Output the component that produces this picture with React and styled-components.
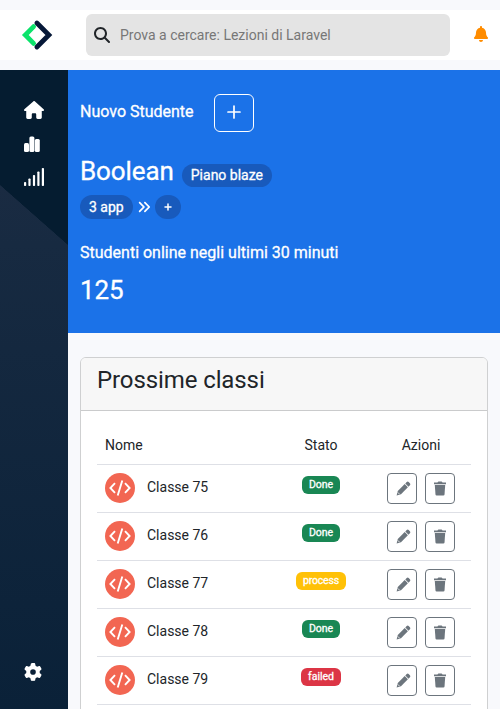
import React from "react";
import styled, { createGlobalStyle } from "styled-components";
import {
  FaMagnifyingGlass,
  FaHouse,
  FaGear,
  FaAnglesRight,
} from "react-icons/fa6";
import { FaBell } from "react-icons/fa";

const GlobalStyle = createGlobalStyle`
  * { box-sizing: border-box; }
  body {
    margin: 0;
    background: #f8f9fc;
    color: #212529;
    font-family: Roboto, "Liberation Sans", sans-serif;
    font-size: 14px;
    letter-spacing: 0;
    overflow: hidden;
  }
`;

const Page = styled.div`
  height: 709px;
  padding-top: 10px;
  display: flex;
  flex-direction: column;
  overflow: hidden;
`;

const TopBar = styled.header`
  flex: none;
  height: 50px;
  margin-bottom: 10px;
  background: #fff;
  display: flex;
  align-items: center;
  padding: 0 11px 0 21px;
`;

const Logo = styled.svg`
  display: block;
  width: 32px;
  height: 32px;
  margin-right: 33px;
`;

const SearchBox = styled.div`
  width: 364px;
  height: 42px;
  border-radius: 6px;
  background: #e4e4e4;
  display: flex;
  align-items: center;
  padding-left: 8px;
  gap: 10px;
  color: #777;
  svg { color: #212529; }
`;

const BellButton = styled.div`
  margin-left: auto;
  margin-bottom: 2px;
  display: flex;
  color: #ff8c00;
`;

const Body = styled.div`
  flex: 1;
  min-height: 0;
  display: flex;
`;

const Sidebar = styled.nav`
  flex: none;
  width: 68px;
  padding: 30px 0 28px 24px;
  display: flex;
  flex-direction: column;
  color: #fff;
  background:
    linear-gradient(to top right, transparent 49.7%, #051c30 50.3%) 0 115px / 68px 60px no-repeat,
    linear-gradient(#051c30, #051c30) 0 0 / 68px 115px no-repeat,
    linear-gradient(#1a2b42 115px, #172a41 175px, #0a2138 100%);
  svg { display: block; flex: none; }
`;

const Bars = styled.svg`
  width: 16px;
  height: 16px;
  margin-top: 16px;
`;

const Signal = styled.svg`
  width: 20px;
  height: 18px;
  margin-top: 16px;
`;

const SettingsLink = styled.div`
  margin-top: auto;
`;

const Main = styled.main`
  flex: 1;
  min-width: 0;
`;

const Hero = styled.section`
  height: 263px;
  padding: 24px 12px;
  background: #1b72e8;
  color: #fff;
  -webkit-text-stroke: 0.3px #fff;
`;

const NewStudent = styled.div`
  display: flex;
  align-items: flex-start;
  font-size: 16px;
  line-height: 35px;
`;

const NewStudentLabel = styled.span`
  width: 134px;
`;

const AddButton = styled.button`
  width: 40px;
  height: 38px;
  padding: 0 0 2px;
  border: 1px solid #fff;
  border-radius: 6px;
  background: transparent;
  color: #fff;
  display: flex;
  align-items: center;
  justify-content: center;
`;

const PlanRow = styled.div`
  display: flex;
  gap: 8px;
  margin-top: 23px;
  height: 34px;
`;

const BigText = styled.div`
  font-size: 26px;
  line-height: 32px;
  letter-spacing: -0.1px;
`;

const Pill = styled.span`
  height: ${(p) => p.$height || 24}px;
  padding: 0 9px;
  margin-top: ${(p) => p.$drop || 0}px;
  border-radius: 12px;
  background: #185abc;
  font-size: 14px;
  line-height: ${(p) => p.$height || 24}px;
  white-space: nowrap;
  display: flex;
  align-items: center;
`;

const AppRow = styled.div`
  display: flex;
  align-items: center;
  gap: 4px;
  margin-top: 6px;
`;

const OnlineLabel = styled.div`
  margin-top: 22px;
  font-size: 16px;
  line-height: 24px;
`;

const Count = styled(BigText)`
  margin-top: 9px;
`;

const Card = styled.section`
  margin: 24px 12px 0;
  height: 400px;
  border: 1px solid #cfd0d1;
  border-radius: 6px;
  background: #fff;
  overflow: hidden;
`;

const CardHeader = styled.h2`
  margin: 0;
  height: 53px;
  padding: 7px 16px 0;
  border-bottom: 1px solid #cacbcc;
  background: #f7f7f7;
  font-size: 24px;
  line-height: 30px;
  font-weight: 400;
  letter-spacing: -0.1px;
`;

const Table = styled.div`
  padding: 16px;
`;

const Row = styled.div`
  display: grid;
  grid-template-columns: 174px 100px 100px;
  height: ${(p) => (p.$head ? 38 : 48)}px;
  border-bottom: 1px solid #dee0e6;
  justify-items: center;
  align-items: start;
`;

const HeadCell = styled.div`
  line-height: 36px;
  justify-self: ${(p) => (p.$start ? "start" : "center")};
  padding: 0 ${(p) => (p.$start ? 8 : 0)}px;
`;

const NameCell = styled.div`
  justify-self: start;
  padding: 8px 8px 0;
  display: flex;
  gap: 12px;
  line-height: 29px;
`;

const CodeIcon = styled.svg`
  width: 30px;
  height: 30px;
`;

const statusColors = { Done: "#198754", process: "#ffc107", failed: "#dc3545" };

const Status = styled.span`
  margin-top: 11px;
  height: 18px;
  padding: 0 7px;
  border-radius: 6px;
  background: ${(p) => statusColors[p.$status]};
  color: #fff;
  font-size: 10.5px;
  letter-spacing: ${(p) => (p.$status === "process" ? -0.2 : 0)}px;
  line-height: 17px;
  -webkit-text-stroke: 0.3px #fff;
`;

const Actions = styled.div`
  display: flex;
  gap: 8px;
  padding-top: 8px;
`;

const ActionButton = styled.button`
  width: 30px;
  height: 31px;
  padding: 0 0 1px;
  border: 1px solid #6c757d;
  border-radius: 4px;
  background: #fff;
  color: #6c757d;
  display: flex;
  align-items: center;
  justify-content: center;
`;

const PencilIcon = styled.svg`
  display: block;
  width: 15px;
  height: 15px;
  margin-left: 2px;
`;

const TrashIcon = styled.svg`
  display: block;
  width: 12px;
  height: 15px;
`;

const classes = [
  ["Classe 75", "Done"],
  ["Classe 76", "Done"],
  ["Classe 77", "process"],
  ["Classe 78", "Done"],
  ["Classe 79", "failed"],
];

function Plus({ size, weight }) {
  return (
    <svg width={size} height={size} viewBox={`0 0 ${size} ${size}`} stroke="currentColor" strokeWidth={weight} strokeLinecap="round">
      <path d={`M${size / 2} 1V${size - 1}M1 ${size / 2}H${size - 1}`} />
    </svg>
  );
}

function Pencil() {
  return (
    <PencilIcon viewBox="0 0 15 15" fill="currentColor">
      <path d="M10.7 1.1q1-1 2 0l1.2 1.2q1 1 0 2l-1.4 1.4-3.2-3.2z" />
      <path d="M8.7 3.1l3.2 3.2-6.9 6.9-4.4 1.2L1.8 10z" />
      <path d="M1.8 11.4l1.8 1.8" stroke="#fff" strokeWidth="0.8" />
    </PencilIcon>
  );
}

function Trash() {
  return (
    <TrashIcon viewBox="0 0 12 15" fill="currentColor">
      <path d="M0 1.6h3.4L4.4.6h3.2l1 1H12v1.7H0z" />
      <path d="M.8 4.1h10.4l-.7 9.5q-.1 1-1.1 1H2.6q-1 0-1.1-1z" />
    </TrashIcon>
  );
}

export default function App() {
  return (
    <Page>
      <GlobalStyle />
      <TopBar>
        <Logo viewBox="0 0 32 32" fill="none" strokeLinecap="round">
          <path d="M12.6 7.6 L4.3 16 L12.6 24.4" stroke="#0be36b" strokeWidth="4.8" />
          <path d="M15.9 4 L27.9 16 L15.9 28" stroke="#061838" strokeWidth="4.8" />
        </Logo>
        <SearchBox>
          <FaMagnifyingGlass size={16} />
          Prova a cercare: Lezioni di Laravel
        </SearchBox>
        <BellButton><FaBell size={16} /></BellButton>
      </TopBar>
      <Body>
        <Sidebar>
          <FaHouse size={20} />
          <Bars viewBox="0 0 16 16" fill="currentColor">
            <rect x="0" y="7" width="5" height="9" rx="1.5" />
            <rect x="5.4" y="0.5" width="5" height="15.5" rx="1.5" />
            <rect x="10.8" y="3" width="5" height="13" rx="1.5" />
          </Bars>
          <Signal viewBox="0 0 20 18" fill="currentColor">
            <rect x="0" y="14" width="2.2" height="4" rx="0.8" />
            <rect x="4.4" y="10.5" width="2.2" height="7.5" rx="0.8" />
            <rect x="8.9" y="7" width="2.2" height="11" rx="0.8" />
            <rect x="13.3" y="3.5" width="2.2" height="14.5" rx="0.8" />
            <rect x="17.8" y="0" width="2.2" height="18" rx="0.8" />
          </Signal>
          <SettingsLink><FaGear size={18} /></SettingsLink>
        </Sidebar>
        <Main>
          <Hero>
            <NewStudent>
              <NewStudentLabel>Nuovo Studente</NewStudentLabel>
              <AddButton><Plus size={14} weight={1.7} /></AddButton>
            </NewStudent>
            <PlanRow>
              <BigText>Boolean</BigText>
              <Pill $height={23} $drop={9}>Piano blaze</Pill>
            </PlanRow>
            <AppRow>
              <Pill>3 app</Pill>
              <FaAnglesRight size={14} />
              <Pill><Plus size={8} weight={1.5} /></Pill>
            </AppRow>
            <OnlineLabel>Studenti online negli ultimi 30 minuti</OnlineLabel>
            <Count>125</Count>
          </Hero>
          <Card>
            <CardHeader>Prossime classi</CardHeader>
            <Table>
              <Row $head>
                <HeadCell $start>Nome</HeadCell>
                <HeadCell>Stato</HeadCell>
                <HeadCell>Azioni</HeadCell>
              </Row>
              {classes.map(([name, status]) => (
                <Row key={name}>
                  <NameCell>
                    <CodeIcon viewBox="0 0 30 30" fill="none" stroke="#fff" strokeWidth="1.9">
                      <circle cx="15" cy="15" r="15" fill="#f26652" stroke="none" />
                      <path d="M10 10.2 L5.4 15 L10 19.8 M20 10.2 L24.6 15 L20 19.8 M17.3 7.5 L12.7 22.5" />
                    </CodeIcon>
                    {name}
                  </NameCell>
                  <Status $status={status}>{status}</Status>
                  <Actions>
                    <ActionButton><Pencil /></ActionButton>
                    <ActionButton><Trash /></ActionButton>
                  </Actions>
                </Row>
              ))}
            </Table>
          </Card>
        </Main>
      </Body>
    </Page>
  );
}
